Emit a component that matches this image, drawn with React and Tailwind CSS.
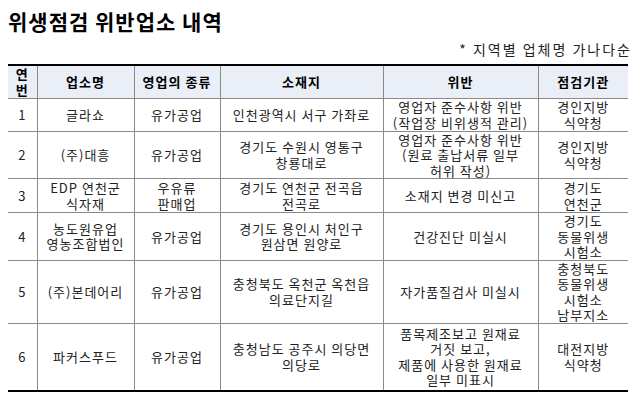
const rows = [
  { no: "1", name: ["글라쇼"], kind: ["유가공업"], addr: ["인천광역시 서구 가좌로"], vio: ["영업자 준수사항 위반", "(작업장 비위생적 관리)"], org: ["경인지방", "식약청"], h: "h-[33px]" },
  { no: "2", name: ["(주)대흥"], kind: ["유가공업"], addr: ["경기도 수원시 영통구", "창룡대로"], vio: ["영업자 준수사항 위반", "(원료 출납서류 일부", "허위 작성)"], org: ["경인지방", "식약청"], h: "h-[46px]" },
  { no: "3", name: ["EDP 연천군", "식자재"], kind: ["우유류", "판매업"], addr: ["경기도 연천군 전곡읍", "전곡로"], vio: ["소재지 변경 미신고"], org: ["경기도", "연천군"], h: "h-[34px]" },
  { no: "4", name: ["농도원유업", "영농조합법인"], kind: ["유가공업"], addr: ["경기도 용인시 처인구", "원삼면 원양로"], vio: ["건강진단 미실시"], org: ["경기도", "동물위생", "시험소"], h: "h-[47px]" },
  { no: "5", name: ["(주)본데어리"], kind: ["유가공업"], addr: ["충청북도 옥천군 옥천읍", "의료단지길"], vio: ["자가품질검사 미실시"], org: ["충청북도", "동물위생", "시험소", "남부지소"], h: "h-[62px]" },
  { no: "6", name: ["파커스푸드"], kind: ["유가공업"], addr: ["충청남도 공주시 의당면", "의당로"], vio: ["품목제조보고 원재료", "거짓 보고,", "제품에 사용한 원재료", "일부 미표시"], org: ["대전지방", "식약청"], h: "h-[68px]" },
];

const Lines = ({ items }) => (
  <div className="flex flex-col items-center leading-[15.5px]">
    {items.map((t, i) => (
      <span key={i} className="whitespace-pre">{t}</span>
    ))}
  </div>
);

const cell = "border-x border-[#8a8a8a] first:border-l-0 last:border-r-0 text-center align-middle p-0";

export default function App() {
  return (
    <div
      className="w-[640px] h-[402px] bg-white text-[#222] px-2 pt-[7px]"
      style={{ fontFamily: '"Noto Sans CJK KR", "Noto Sans", sans-serif' }}
    >
      <h1 className="text-[21px] font-bold leading-[28px] tracking-[1px] text-black">위생점검 위반업소 내역</h1>
      <p className="text-right text-[14px] leading-[18px] mt-[5px] tracking-[2px] text-[#222]">* 지역별 업체명 가나다순</p>
      <table className="mt-[6px] w-[620px] border-collapse table-fixed text-[13px] tracking-[1px]">
        <colgroup>
          <col className="w-[29px]" />
          <col className="w-[97px]" />
          <col className="w-[86px]" />
          <col className="w-[163px]" />
          <col className="w-[155px]" />
          <col className="w-[90px]" />
        </colgroup>
        <thead>
          <tr className="h-[33px] bg-[#e9eef7] border-t-2 border-black border-b border-b-[#8a8a8a] font-bold text-black">
            <th className={cell}><Lines items={["연", "번"]} /></th>
            <th className={cell}>업소명</th>
            <th className={cell}>영업의 종류</th>
            <th className={cell}>소재지</th>
            <th className={cell}>위반</th>
            <th className={cell}>점검기관</th>
          </tr>
        </thead>
        <tbody>
          {rows.map((r, i) => (
            <tr
              key={r.no}
              className={`${r.h} ${i === rows.length - 1 ? "border-b-2 border-black" : "border-b border-[#8a8a8a]"}`}
            >
              <td className={cell}>{r.no}</td>
              <td className={cell}><Lines items={r.name} /></td>
              <td className={cell}><Lines items={r.kind} /></td>
              <td className={cell}><Lines items={r.addr} /></td>
              <td className={cell}><Lines items={r.vio} /></td>
              <td className={cell}><Lines items={r.org} /></td>
            </tr>
          ))}
        </tbody>
      </table>
    </div>
  );
}
